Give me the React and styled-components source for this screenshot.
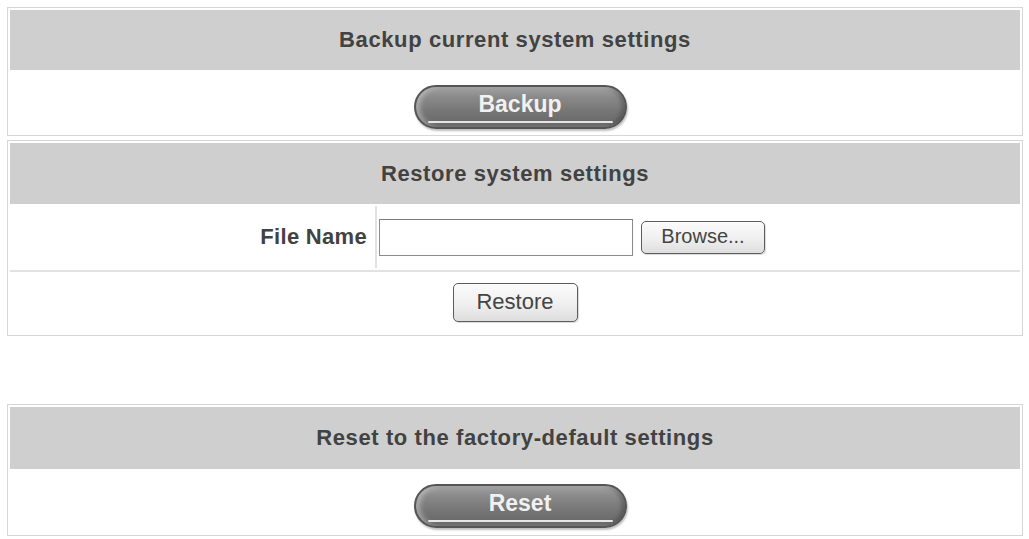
import React from "react";
import styled, { createGlobalStyle } from "styled-components";

const GlobalStyle = createGlobalStyle`
  html, body { margin: 0; padding: 0; background: #ffffff; }
  body { font-family: "Liberation Sans", Arial, sans-serif; }
  * { box-sizing: border-box; }
`;

const Page = styled.div`
  width: 1029px;
  padding: 7px 6px 0 7px;
  display: flex;
  flex-direction: column;
`;

const Panel = styled.section`
  border: 1px solid #d6d6d6;
  padding: 2px;
  display: flex;
  flex-direction: column;
  gap: 2px;
  margin-top: ${(p) => p.$offset || 0}px;
  background: #fff;
`;

const Header = styled.div`
  height: ${(p) => p.$h || 60}px;
  background: #cfcfcf;
  display: flex;
  align-items: center;
  justify-content: center;
  color: #424242;
  font-weight: bold;
  font-size: 22px;
  letter-spacing: 0.6px;
`;

const Row = styled.div`
  height: ${(p) => p.$h || 61}px;
  display: flex;
  align-items: center;
  justify-content: center;
  background: #fff;
  border-top: ${(p) => (p.$divided ? "2px solid #e2e2e2" : "none")};
`;

const FieldRow = styled.div`
  height: 62px;
  display: grid;
  grid-template-columns: 367px 1fr;
  background: #fff;
`;

const Label = styled.div`
  display: flex;
  align-items: center;
  justify-content: flex-end;
  padding-right: 8px;
  border-right: 2px solid #e2e2e2;
  color: #424242;
  font-weight: bold;
  font-size: 22px;
  letter-spacing: 0.3px;
`;

const Field = styled.div`
  display: flex;
  align-items: center;
  gap: 8px;
  padding-left: 2px;
`;

const TextInput = styled.input`
  width: 254px;
  height: 37px;
  border: 1px solid #8c8c8c;
  border-top-color: #7a7a7a;
  background: #fff;
  padding: 0 4px;
  font-size: 18px;
  font-family: "Liberation Sans", Arial, sans-serif;
  outline: none;
`;

const PlainButton = styled.button`
  width: ${(p) => p.$w}px;
  height: ${(p) => p.$h}px;
  border: 1px solid #5c5c5c;
  border-radius: 5px;
  background: linear-gradient(to bottom, #fbfbfb 0%, #efefef 55%, #dedede 100%);
  color: #444444;
  font-family: "Liberation Sans", Arial, sans-serif;
  font-size: ${(p) => p.$fs}px;
  padding: 0 0 2px;
  box-shadow: 1px 1px 1px rgba(0, 0, 0, 0.15);
  cursor: pointer;
`;

const PillButton = styled.button`
  position: relative;
  width: 213px;
  height: 44px;
  margin: 8px 0 0 10px;
  border-radius: 22px;
  border: 2px solid #555555;
  background: linear-gradient(
    to bottom,
    #a2a2a2 0%,
    #8a8a8a 25%,
    #767676 60%,
    #656565 100%
  );
  box-shadow: inset 4px 0 5px rgba(255, 255, 255, 0.35),
    inset -3px 0 4px rgba(0, 0, 0, 0.25), 1px 2px 2px rgba(0, 0, 0, 0.25);
  color: #f1f1f1;
  font-family: "Liberation Sans", Arial, sans-serif;
  font-weight: bold;
  font-size: 23px;
  padding: 0 0 5px;
  cursor: pointer;

  &::after {
    content: "";
    position: absolute;
    left: 12px;
    right: 12px;
    bottom: 4px;
    height: 2px;
    border-radius: 1px;
    background: #e6e6e6;
  }
`;

export default function App() {
  return (
    <>
      <GlobalStyle />
      <Page>
        <Panel>
          <Header $h={60}>Backup current system settings</Header>
          <Row $h={61}>
            <PillButton>Backup</PillButton>
          </Row>
        </Panel>

        <Panel $offset={4}>
          <Header $h={61}>Restore system settings</Header>
          <FieldRow>
            <Label>File Name</Label>
            <Field>
              <TextInput type="text" />
              <PlainButton $w={124} $h={33} $fs={20}>
                Browse...
              </PlainButton>
            </Field>
          </FieldRow>
          <Row $h={63} $divided>
            <PlainButton $w={125} $h={39} $fs={22}>
              Restore
            </PlainButton>
          </Row>
        </Panel>

        <Panel $offset={68}>
          <Header $h={62}>Reset to the factory-default settings</Header>
          <Row $h={62}>
            <PillButton>Reset</PillButton>
          </Row>
        </Panel>
      </Page>
    </>
  );
}
